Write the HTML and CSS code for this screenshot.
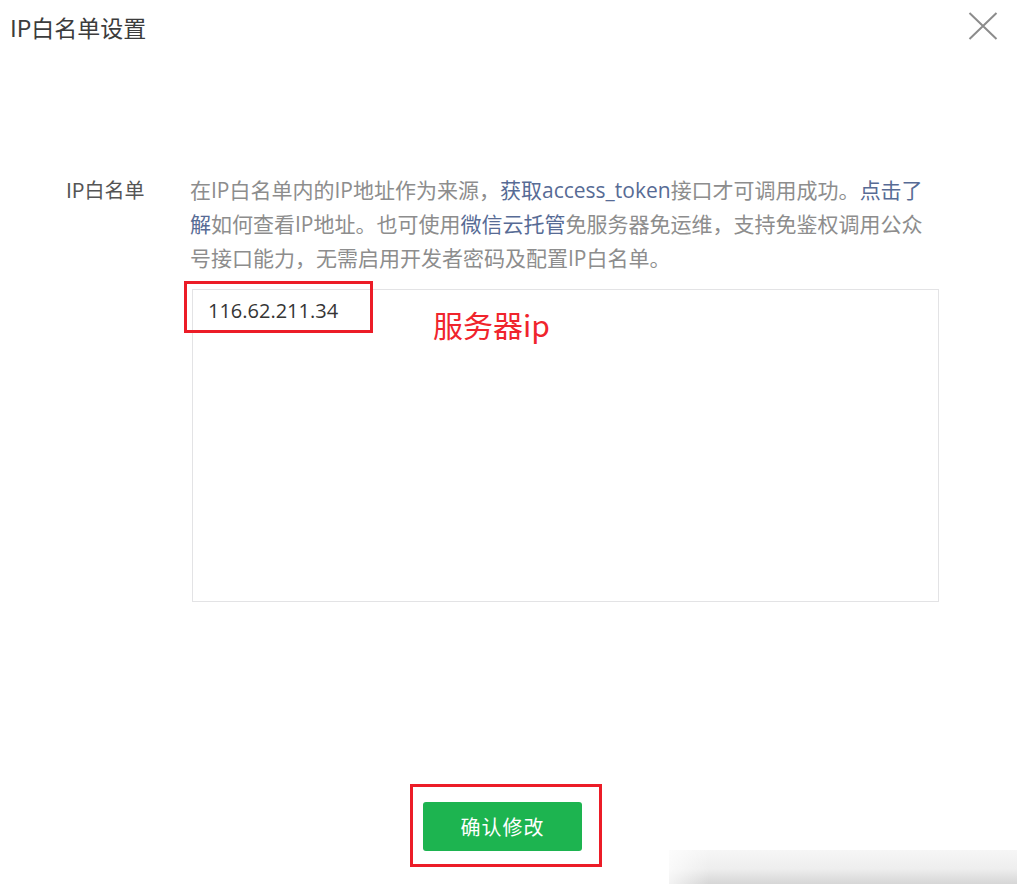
FILE: index.html
```html
<!DOCTYPE html>
<html lang="zh-CN">
<head>
<meta charset="utf-8">
<title>IP白名单设置</title>
<link rel="stylesheet" href="styles.css">
</head>
<body>
<div class="dialog">
  <header class="dialog-head">
    <h1 class="dialog-title">IP白名单设置</h1>
    <button class="close-btn" aria-label="关闭">
      <svg width="30" height="28" viewBox="0 0 30 28"><path d="M1.5 1 L28.5 27 M28.5 1 L1.5 27" stroke="#8c8c8c" stroke-width="2" fill="none"/></svg>
    </button>
  </header>

  <section class="form-row">
    <div class="form-label">IP白名单</div>
    <div class="form-body">
      <p class="desc">在IP白名单内的IP地址作为来源，<a class="link">获取access_token</a>接口才可调用成功。<a class="link">点击了<br>解</a>如何查看IP地址。也可使用<a class="link">微信云托管</a>免服务器免运维，支持免鉴权调用公众<br>号接口能力，无需启用开发者密码及配置IP白名单。</p>
      <div class="ip-box">
        <div class="ip-text">116.62.211.34</div>
        <div class="mark-box"></div>
        <div class="mark-note">服务器ip</div>
      </div>
    </div>
  </section>

  <footer class="dialog-foot">
    <div class="mark-wrap">
      <button class="btn-primary">确认修改</button>
    </div>
  </footer>

  <div class="fade-bar"></div>
</div>
</body>
</html>
```

FILE: styles.css
```css
html, body {
  margin: 0;
  padding: 0;
  background: #ffffff;
}

.dialog {
  position: relative;
  width: 1024px;
  height: 884px;
  overflow: hidden;
  font-family: "Open Sans", "Noto Sans CJK SC", sans-serif;
}

.dialog-head {
  display: flex;
  justify-content: space-between;
  align-items: flex-start;
  padding: 11px 26px 0 10px;
}

.dialog-title {
  margin: 0;
  font-family: "Noto Sans CJK SC", sans-serif;
  font-weight: 400;
  font-size: 23px;
  line-height: 32px;
  color: #3c3c3c;
}

.close-btn {
  margin: 1px 0 0 0;
  padding: 0;
  border: 0;
  background: none;
  width: 30px;
  height: 28px;
  display: block;
}

.close-btn svg {
  display: block;
}

.form-row {
  display: flex;
  margin-top: 130px;
}

.form-label {
  width: 124px;
  padding-left: 66px;
  font-family: "Noto Sans CJK SC", sans-serif;
  font-size: 20px;
  line-height: 34px;
  color: #555555;
}

.form-body {
  display: flex;
  flex-direction: column;
}

.desc {
  margin: 0;
  font-size: 21px;
  line-height: 34px;
  color: #8d8d8d;
  white-space: nowrap;
}

.link {
  color: #576b95;
  text-decoration: none;
}

.ip-box {
  position: relative;
  box-sizing: border-box;
  margin-top: 14px;
  margin-left: 2px;
  width: 747px;
  height: 313px;
  border: 1px solid #e3e3e5;
  padding: 6px 0 0 15px;
}

.ip-text {
  font-size: 20px;
  line-height: 30px;
  color: #353535;
}

.mark-box {
  position: absolute;
  left: -9px;
  top: -9px;
  width: 183px;
  height: 46px;
  border: 3px solid #ec1c27;
}

.mark-note {
  position: absolute;
  left: 240px;
  top: 17px;
  font-family: "Noto Sans CJK SC", sans-serif;
  font-size: 30px;
  line-height: 34px;
  color: #f0242c;
}

.dialog-foot {
  display: flex;
  justify-content: center;
  padding-right: 12px;
  margin-top: 182px;
}

.mark-wrap {
  display: flex;
  border: 3px solid #ec1c27;
  padding: 15px 17px 13px 10px;
}

.btn-primary {
  width: 159px;
  height: 49px;
  border: 0;
  border-radius: 3px;
  background: #1db450;
  color: #ffffff;
  font-family: "Noto Sans CJK SC", sans-serif;
  font-size: 20px;
  letter-spacing: 1px;
  padding: 0;
}

.fade-bar {
  position: absolute;
  left: 669px;
  top: 850px;
  width: 348px;
  height: 34px;
  background:
    linear-gradient(to right, rgba(255,255,255,0.7), rgba(255,255,255,0) 40px),
    linear-gradient(to bottom, #f6f6f6 0%, #eeeeee 55%, #d6d6d6 100%);
}
```
